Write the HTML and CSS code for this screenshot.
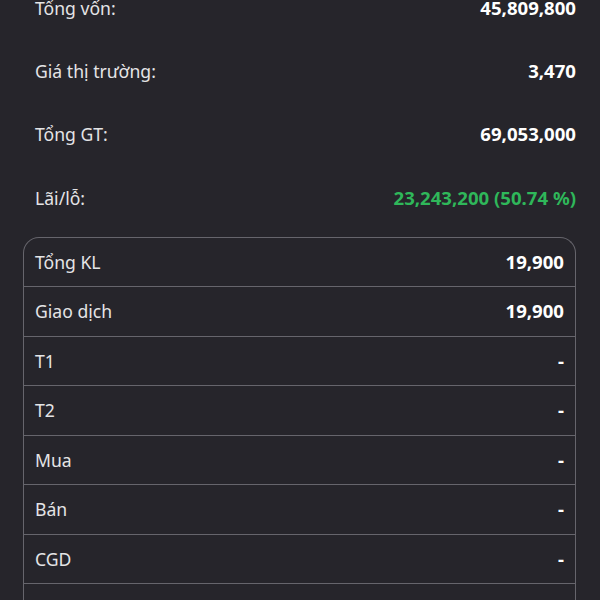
FILE: index.html
```html
<!DOCTYPE html>
<html lang="vi">
<head>
    <meta charset="UTF-8">
    <meta name="viewport" content="width=device-width, initial-scale=1.0">
    <title>Chi tiết danh mục</title>
    <link rel="stylesheet" href="styles.css">
</head>
<body>
    <div class="container">
        <div class="summary">
            <div class="summary-row">
                <span class="label">Tổng vốn:</span>
                <span class="value">45,809,800</span>
            </div>
            <div class="summary-row">
                <span class="label">Giá thị trường:</span>
                <span class="value">3,470</span>
            </div>
            <div class="summary-row">
                <span class="label">Tổng GT:</span>
                <span class="value">69,053,000</span>
            </div>
            <div class="summary-row">
                <span class="label">Lãi/lỗ:</span>
                <span class="value up">23,243,200 (50.74 %)</span>
            </div>
        </div>

        <div class="volume-table">
            <div class="volume-row">
                <span class="label">Tổng KL</span>
                <span class="value">19,900</span>
            </div>
            <div class="volume-row">
                <span class="label">Giao dịch</span>
                <span class="value">19,900</span>
            </div>
            <div class="volume-row">
                <span class="label">T1</span>
                <span class="value">-</span>
            </div>
            <div class="volume-row">
                <span class="label">T2</span>
                <span class="value">-</span>
            </div>
            <div class="volume-row">
                <span class="label">Mua</span>
                <span class="value">-</span>
            </div>
            <div class="volume-row">
                <span class="label">Bán</span>
                <span class="value">-</span>
            </div>
            <div class="volume-row">
                <span class="label">CGD</span>
                <span class="value">-</span>
            </div>
            <div class="volume-row">
                <span class="label">Cầm cố</span>
                <span class="value">-</span>
            </div>
        </div>
    </div>
</body>
</html>
```

FILE: styles.css
```css
body {
    font-family: 'Noto Sans', 'Open Sans', sans-serif;
    font-size: 18px;
    line-height: 24px;
    margin: 0;
    background-color: #26252b;
    color: #e8e8ea;
    overflow: hidden;
}
.container {
    margin-top: -24px;
    padding: 0 24px 0 23px;
}
.summary {
    margin-bottom: 7px;
}
.summary-row {
    display: flex;
    justify-content: space-between;
    align-items: center;
    height: 63.4px;
    padding-left: 12px;
}
.label {
    color: #e4e4e6;
    font-size: 17.6px;
}
.value {
    color: #ffffff;
    font-weight: 700;
    font-size: 18.6px;
}
.value.up {
    color: #2fb75a;
}
.volume-table {
    border: 1.5px solid #66656c;
    border-bottom: none;
    border-radius: 16px 16px 0 0;
}
.volume-row {
    display: flex;
    justify-content: space-between;
    align-items: center;
    height: 48.5px;
    padding: 0 11px 0 11px;
}
.volume-row + .volume-row {
    border-top: 1px solid #66656c;
}
```
